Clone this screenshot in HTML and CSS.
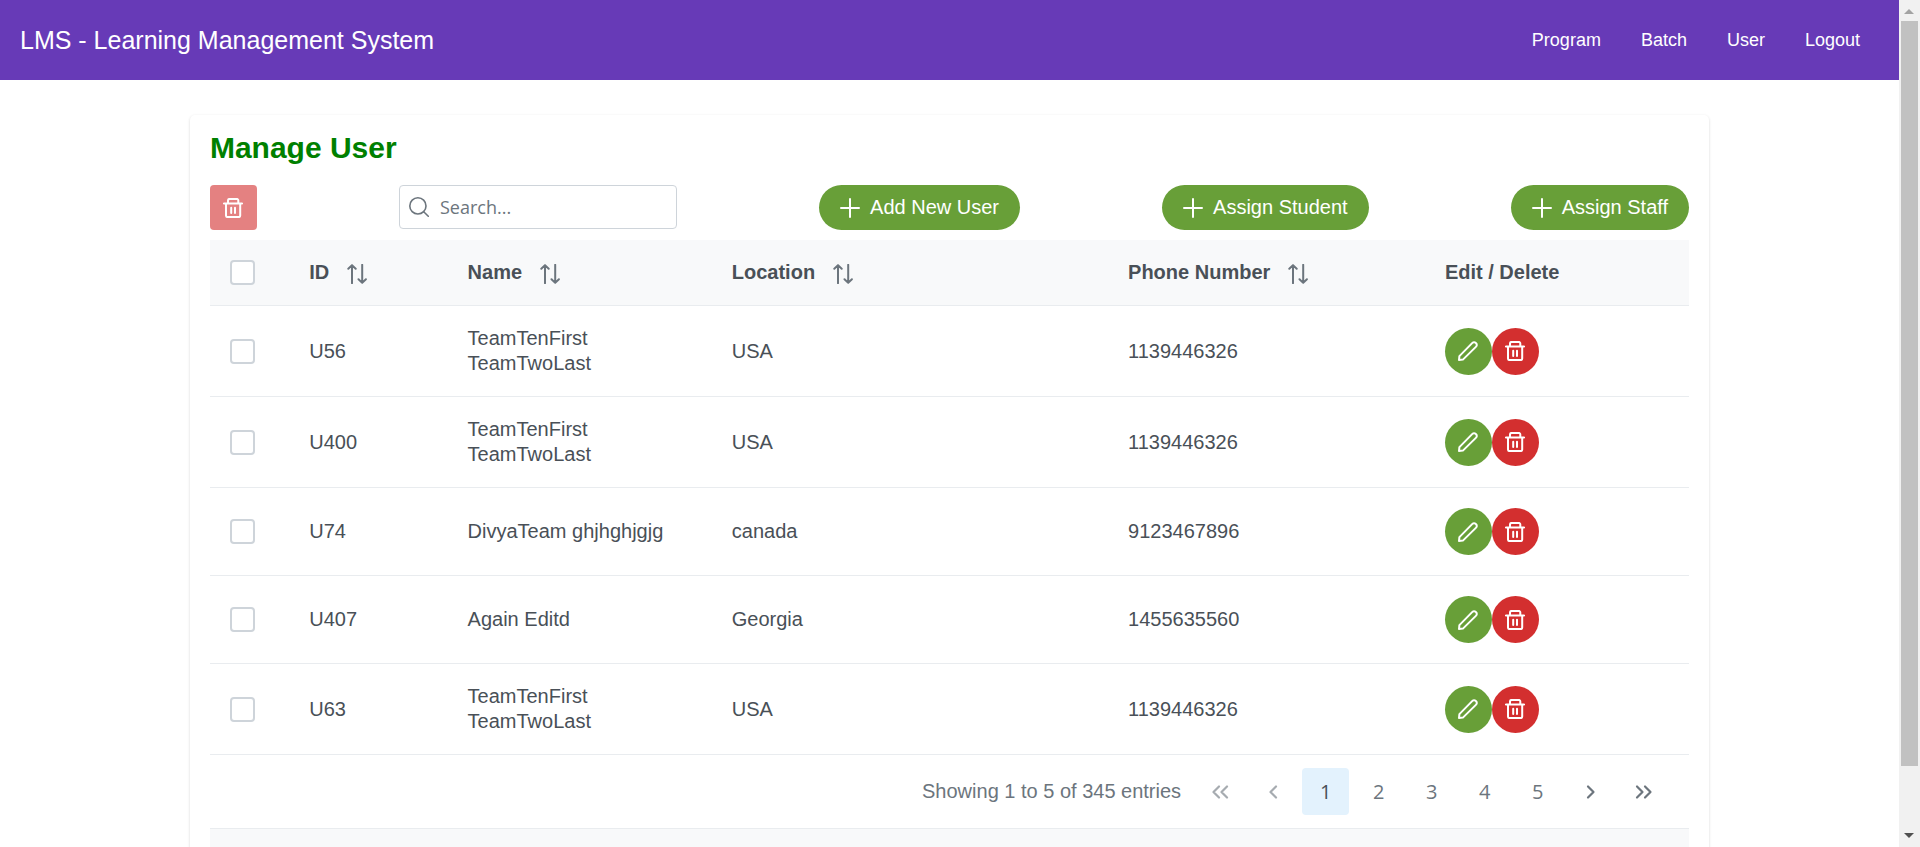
FILE: index.html
```html
<!DOCTYPE html>
<html lang="en">
<head>
<meta charset="utf-8">
<title>LMS - Learning Management System</title>
<link rel="stylesheet" href="styles.css">
</head>
<body>
<svg class="sprite" aria-hidden="true">
  <symbol id="trash" viewBox="0 0 20 20"><path d="M.9 5.500h18.200M5 5.300V2.600A1.700 1.700 0 0 1 6.700.9h6.900A1.700 1.700 0 0 1 15.300 2.600V5.300M3 5.500V17.400A1.700 1.700 0 0 0 4.700 19.100h10.800A1.700 1.700 0 0 0 17.200 17.400V5.500M8.200 9.700v5.300M12 9.700v5.300"/></symbol>
  <symbol id="pencil" viewBox="0 0 20 20"><path d="M1 19l.4-3.900L14.400 1.900a2.300 2.300 0 0 1 3.300 0l.4.4a2.300 2.300 0 0 1 0 3.300L4.900 18.600z"/></symbol>
  <symbol id="plus" viewBox="0 0 20 20"><path d="M10 1v18M1 10h18"/></symbol>
  <symbol id="search" viewBox="0 0 20 20"><circle cx="8.900" cy="8.900" r="8.100"/><path d="M14.700 14.700l4.600 4.600"/></symbol>
  <symbol id="sort" viewBox="0 0 20 20"><path d="M5 19.200V1.200M1.300 4.700L5 1.100l3.700 3.600M15.200.8V18.800M11.500 15.300l3.700 3.600 3.700-3.600"/></symbol>
  <symbol id="left" viewBox="0 0 20 20"><path d="M13 4.500L7.500 10l5.500 5.500"/></symbol>
  <symbol id="right" viewBox="0 0 20 20"><path d="M7 4.500l5.500 5.500L7 15.500"/></symbol>
  <symbol id="first" viewBox="0 0 20 20"><path d="M9 4.500L3.500 10 9 15.500M17 4.500L11.500 10l5.500 5.500"/></symbol>
  <symbol id="last" viewBox="0 0 20 20"><path d="M3 4.500L8.500 10 3 15.500M11 4.500l5.500 5.500-5.500 5.500"/></symbol>
</svg>
<div class="shell">
  <div class="page">
    <header class="topbar">
      <span class="brand">LMS - Learning Management System</span>
      <nav class="nav">
        <a href="#program">Program</a>
        <a href="#batch">Batch</a>
        <a href="#user">User</a>
        <a href="#logout">Logout</a>
      </nav>
    </header>
    <main class="card">
      <h1 class="title">Manage User</h1>
      <div class="toolbar">
        <button class="btn btn-delete" disabled aria-label="Delete selected"><svg class="icon"><use href="#trash"/></svg></button>
        <label class="search">
          <svg class="icon icon-thin"><use href="#search"/></svg>
          <input type="text" placeholder="Search..." aria-label="Search">
        </label>
        <button class="btn btn-add"><svg class="icon"><use href="#plus"/></svg>Add New User</button>
        <button class="btn btn-add"><svg class="icon"><use href="#plus"/></svg>Assign Student</button>
        <button class="btn btn-add"><svg class="icon"><use href="#plus"/></svg>Assign Staff</button>
      </div>
      <table class="table">
        <colgroup><col class="c-check"><col class="c-id"><col class="c-name"><col class="c-loc"><col class="c-phone"><col class="c-edit"></colgroup>
        <thead>
          <tr>
            <th><input class="check" type="checkbox" aria-label="Select all"></th>
            <th><span class="head">ID<svg class="icon sort"><use href="#sort"/></svg></span></th>
            <th><span class="head">Name<svg class="icon sort"><use href="#sort"/></svg></span></th>
            <th><span class="head">Location<svg class="icon sort"><use href="#sort"/></svg></span></th>
            <th><span class="head">Phone Number<svg class="icon sort"><use href="#sort"/></svg></span></th>
            <th>Edit / Delete</th>
          </tr>
        </thead>
        <tbody>
          <tr>
            <td><input class="check" type="checkbox" aria-label="Select U56"></td>
            <td>U56</td><td>TeamTenFirst TeamTwoLast</td><td>USA</td><td>1139446326</td>
            <td><div class="actions"><button class="round edit" aria-label="Edit"><svg class="icon"><use href="#pencil"/></svg></button><button class="round del" aria-label="Delete"><svg class="icon"><use href="#trash"/></svg></button></div></td>
          </tr>
          <tr>
            <td><input class="check" type="checkbox" aria-label="Select U400"></td>
            <td>U400</td><td>TeamTenFirst TeamTwoLast</td><td>USA</td><td>1139446326</td>
            <td><div class="actions"><button class="round edit" aria-label="Edit"><svg class="icon"><use href="#pencil"/></svg></button><button class="round del" aria-label="Delete"><svg class="icon"><use href="#trash"/></svg></button></div></td>
          </tr>
          <tr>
            <td><input class="check" type="checkbox" aria-label="Select U74"></td>
            <td>U74</td><td>DivyaTeam ghjhghjgjg</td><td>canada</td><td>9123467896</td>
            <td><div class="actions"><button class="round edit" aria-label="Edit"><svg class="icon"><use href="#pencil"/></svg></button><button class="round del" aria-label="Delete"><svg class="icon"><use href="#trash"/></svg></button></div></td>
          </tr>
          <tr>
            <td><input class="check" type="checkbox" aria-label="Select U407"></td>
            <td>U407</td><td>Again Editd</td><td>Georgia</td><td>1455635560</td>
            <td><div class="actions"><button class="round edit" aria-label="Edit"><svg class="icon"><use href="#pencil"/></svg></button><button class="round del" aria-label="Delete"><svg class="icon"><use href="#trash"/></svg></button></div></td>
          </tr>
          <tr>
            <td><input class="check" type="checkbox" aria-label="Select U63"></td>
            <td>U63</td><td>TeamTenFirst TeamTwoLast</td><td>USA</td><td>1139446326</td>
            <td><div class="actions"><button class="round edit" aria-label="Edit"><svg class="icon"><use href="#pencil"/></svg></button><button class="round del" aria-label="Delete"><svg class="icon"><use href="#trash"/></svg></button></div></td>
          </tr>
        </tbody>
      </table>
      <div class="paginator">
        <span class="report">Showing 1 to 5 of 345 entries</span>
        <button class="pg" disabled aria-label="First page"><svg class="icon icon-bold"><use href="#first"/></svg></button>
        <button class="pg" disabled aria-label="Previous page"><svg class="icon icon-bold"><use href="#left"/></svg></button>
        <button class="pg active">1</button>
        <button class="pg">2</button>
        <button class="pg">3</button>
        <button class="pg">4</button>
        <button class="pg">5</button>
        <button class="pg" aria-label="Next page"><svg class="icon icon-bold"><use href="#right"/></svg></button>
        <button class="pg" aria-label="Last page"><svg class="icon icon-bold"><use href="#last"/></svg></button>
      </div>
      <div class="table-footer"></div>
    </main>
  </div>
  <div class="scrollbar" aria-hidden="true">
    <svg class="arrow arrow-up" viewBox="0 0 21 21"><path d="M5 14l5-5 5 5z"/></svg>
    <div class="track"><div class="thumb"></div></div>
    <svg class="arrow arrow-down" viewBox="0 0 21 21"><path d="M5 7l5 5 5-5z"/></svg>
  </div>
</div>
</body>
</html>
```
FILE: styles.css
```css
* { box-sizing: border-box; }

body {
  margin: 0;
  background: #fff;
  color: #495057;
  font: 20px/25px "Liberation Sans", Arial, sans-serif;
}

button { border: 0; font: inherit; cursor: pointer; }

.sprite { display: none; }

.icon {
  width: 20px;
  height: 20px;
  flex: none;
  fill: none;
  stroke: currentColor;
  stroke-width: 2;
  stroke-linecap: round;
  stroke-linejoin: round;
}
.icon-thin { stroke-width: 1.6; }
.icon-bold { stroke-width: 2.2; }

.shell {
  display: grid;
  grid-template-columns: 1fr 21px;
  height: 100vh;
}
.page { min-width: 0; overflow: hidden; }

.topbar {
  display: flex;
  align-items: center;
  justify-content: space-between;
  height: 80px;
  padding: 0 39px 0 20px;
  background: #673ab7;
  color: #fff;
}
.brand { font-size: 25px; line-height: 40px; }
.nav { display: flex; gap: 40px; font-size: 18px; }
.nav a { color: inherit; text-decoration: none; }

.card {
  width: 80%;
  margin: 35px auto;
  padding: 16px 20px;
  border-radius: 5px;
  box-shadow: 0 1px 3px rgba(0, 0, 0, .16);
}
.title {
  margin: 0 0 20px;
  color: #008000;
  font-size: 30px;
  line-height: 34px;
}

.toolbar {
  display: flex;
  align-items: flex-start;
  justify-content: space-between;
  margin-bottom: 10px;
}
.btn {
  display: flex;
  align-items: center;
  justify-content: center;
  height: 45px;
  color: #fff;
}
.btn-delete {
  width: 47px;
  padding: 0;
  border-radius: 4px;
  background: #d32f2f;
  opacity: .6;
}
.btn-add {
  gap: 10px;
  padding: 0 21px;
  border-radius: 40px;
  background: #689f38;
}
.search {
  display: flex;
  align-items: center;
  gap: 11px;
  width: 278px;
  height: 44px;
  padding: 0 9px;
  border: 1px solid #ced4da;
  border-radius: 4px;
  color: #6c757d;
}
.search input {
  flex: 1;
  min-width: 0;
  padding: 0;
  border: 0;
  outline: 0;
  background: none;
  color: #495057;
  font: 18px/25px "Open Sans", "Noto Sans", sans-serif;
}
.search input::placeholder { color: #6c757d; opacity: 1; }

.table {
  width: 100%;
  table-layout: fixed;
  border-collapse: separate;
  border-spacing: 0;
}
.c-check { width: 5.36%; }
.c-id { width: 10.71%; }
.c-name { width: 17.86%; }
.c-loc { width: 26.79%; }
.c-phone { width: 21.42%; }
.c-edit { width: 17.86%; }
.table th,
.table td {
  padding: 20px;
  border-bottom: 1px solid #e9ecef;
  text-align: left;
  vertical-align: middle;
}
.table th { background: #f8f9fa; }
.head { display: flex; align-items: center; gap: 18px; }
.sort { color: #6c757d; margin-top: 4px; margin-bottom: 1px; }

.check {
  display: block;
  appearance: none;
  width: 25px;
  height: 25px;
  margin: 0;
  border: 2px solid #ced4da;
  border-radius: 4px;
  background: #fff;
}

.actions { display: flex; }
.round {
  display: flex;
  align-items: center;
  justify-content: center;
  width: 47px;
  height: 47px;
  padding: 0;
  border-radius: 50%;
  color: #fff;
}
.edit { background: #689f38; }
.del { background: #d32f2f; }

.paginator {
  display: flex;
  align-items: center;
  justify-content: flex-end;
  gap: 6px;
  padding: 13px 22px;
  border-bottom: 1px solid #e9ecef;
  color: #6c757d;
}
.report { margin-right: 9px; }
.pg {
  display: flex;
  align-items: center;
  justify-content: center;
  width: 47px;
  height: 47px;
  padding: 0;
  border-radius: 4px;
  background: none;
  color: #6c757d;
  font-family: "Open Sans", "Noto Sans", sans-serif;
}
.pg:disabled { opacity: .6; }
.pg.active { background: #e3f2fd; color: #495057; }

.table-footer { padding: 33px; background: #f8f9fa; }

.scrollbar {
  display: flex;
  flex-direction: column;
  background: #f1f1f1;
}
.arrow { display: block; width: 21px; height: 21px; }
.arrow-up { fill: #a3a3a3; }
.arrow-down { fill: #505050; }
.track { flex: 1; padding: 0 2px; }
.thumb { height: 92.5%; background: #c1c1c1; }
```
